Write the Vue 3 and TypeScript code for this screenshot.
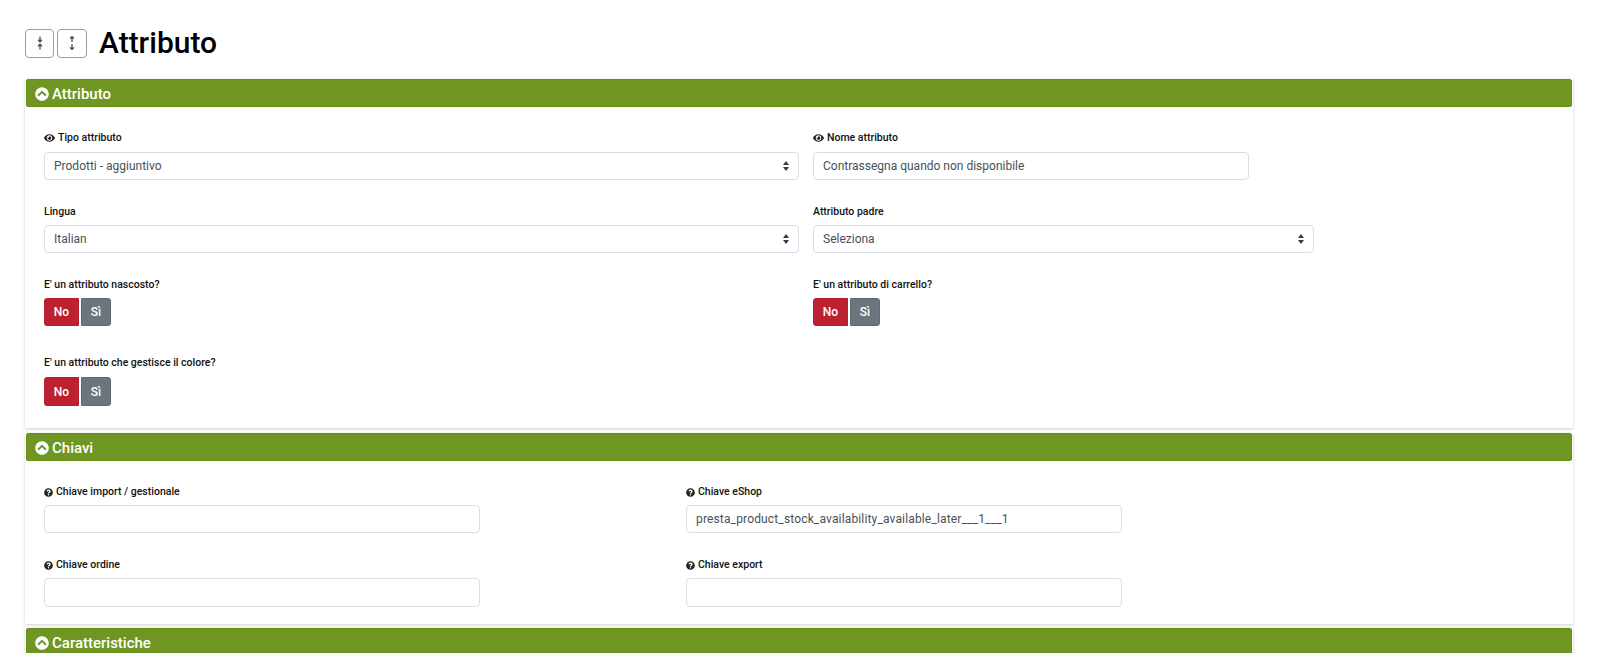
<script setup lang="ts">
const chevronUp =
  'M8 256C8 119 119 8 256 8s248 111 248 248-111 248-248 248S8 393 8 256zm231-113.9L103.5 277.6c-9.4 9.4-9.4 24.6 0 33.9l17 17c9.4 9.4 24.6 9.4 33.9 0L256 226.9l101.6 101.6c9.4 9.4 24.6 9.4 33.9 0l17-17c9.4-9.4 9.4-24.6 0-33.9L273 142.1c-9.4-9.4-24.6-9.4-34 0z'
const question =
  'M504 256c0 136.997-111.043 248-248 248S8 392.997 8 256C8 119.083 119.043 8 256 8s248 111.083 248 248zM262.655 90c-54.497 0-89.255 22.957-116.549 63.758-3.536 5.286-2.353 12.415 2.715 16.258l34.699 26.31c5.205 3.947 12.621 3.008 16.665-2.122 17.864-22.658 30.113-35.797 57.303-35.797 20.429 0 45.698 13.148 45.698 32.958 0 14.976-12.363 22.667-32.534 33.976C247.128 238.528 216 254.941 216 296v4c0 6.627 5.373 12 12 12h56c6.627 0 12-5.373 12-12v-1.333c0-28.462 83.186-29.647 83.186-106.667 0-58.002-60.165-102-116.531-102zM256 338c-25.365 0-46 20.635-46 46 0 25.364 20.635 46 46 46s46-20.636 46-46c0-25.365-20.635-46-46-46z'
const eye =
  'M572.52 241.4C518.29 135.59 410.93 64 288 64S57.68 135.64 3.48 241.41a32.35 32.35 0 0 0 0 29.19C57.71 376.41 165.07 448 288 448s230.32-71.64 284.52-177.41a32.35 32.35 0 0 0 0-29.19zM288 400a144 144 0 1 1 144-144 143.93 143.93 0 0 1-144 144zm0-240a95.31 95.31 0 0 0-25.31 3.79 47.85 47.85 0 0 1-66.9 66.9A95.78 95.78 0 1 0 288 160z'
</script>

<template>
  <div class="page">
    <header class="page-head">
      <div class="tools">
        <button class="tool" type="button" aria-label="Comprimi">
          <svg width="8" height="14" viewBox="0 0 8 14">
            <path d="M4 0.500v5M2 3.700 4 5.800l2-2.100M4 13.500v-5M2 10.300 4 8.200l2 2.100" fill="none" stroke="#495057" stroke-width="1.300" />
          </svg>
        </button>
        <button class="tool" type="button" aria-label="Espandi">
          <svg width="8" height="14" viewBox="0 0 8 14">
            <path d="M4 0.500v5.500M2 2.600 4 .500l2 2.100M4 13.500V8M2 11.400 4 13.500l2-2.100" fill="none" stroke="#495057" stroke-width="1.300" />
          </svg>
        </button>
      </div>
      <h1 class="title">Attributo</h1>
    </header>

    <section class="panel">
      <h2 class="panel-head">
        <svg class="head-icon" viewBox="0 0 512 512"><path :d="chevronUp" /></svg>
        Attributo
      </h2>
      <div class="panel-body body-one">
        <div class="row row-a">
          <div class="field col-wide">
            <label class="lbl">
              <svg class="eye" viewBox="0 0 576 512"><path :d="eye" /></svg>
              Tipo attributo
            </label>
            <select class="ctl sel">
              <option>Prodotti - aggiuntivo</option>
            </select>
          </div>
          <div class="field">
            <label class="lbl">
              <svg class="eye" viewBox="0 0 576 512"><path :d="eye" /></svg>
              Nome attributo
            </label>
            <input class="ctl w-436" type="text" value="Contrassegna quando non disponibile" />
          </div>
        </div>

        <div class="row row-b">
          <div class="field col-wide">
            <label class="lbl">Lingua</label>
            <select class="ctl sel">
              <option>Italian</option>
            </select>
          </div>
          <div class="field">
            <label class="lbl">Attributo padre</label>
            <select class="ctl sel w-501">
              <option>Seleziona</option>
            </select>
          </div>
        </div>

        <div class="row row-c">
          <div class="field col-wide">
            <label class="lbl">E' un attributo nascosto?</label>
            <div class="toggle">
              <button class="btn no" type="button">No</button>
              <button class="btn si" type="button">Sì</button>
            </div>
          </div>
          <div class="field">
            <label class="lbl">E' un attributo di carrello?</label>
            <div class="toggle">
              <button class="btn no" type="button">No</button>
              <button class="btn si" type="button">Sì</button>
            </div>
          </div>
        </div>

        <div class="row row-d">
          <div class="field col-wide">
            <label class="lbl">E' un attributo che gestisce il colore?</label>
            <div class="toggle">
              <button class="btn no tall" type="button">No</button>
              <button class="btn si tall" type="button">Sì</button>
            </div>
          </div>
        </div>
      </div>
    </section>

    <section class="panel">
      <h2 class="panel-head">
        <svg class="head-icon" viewBox="0 0 512 512"><path :d="chevronUp" /></svg>
        Chiavi
      </h2>
      <div class="panel-body body-two">
        <div class="row">
          <div class="field col-keys">
            <label class="lbl">
              <svg class="help" viewBox="0 0 512 512"><path :d="question" /></svg>
              Chiave import / gestionale
            </label>
            <input class="ctl w-436" type="text" />
          </div>
          <div class="field">
            <label class="lbl">
              <svg class="help" viewBox="0 0 512 512"><path :d="question" /></svg>
              Chiave eShop
            </label>
            <input class="ctl w-436 long" type="text" value="presta_product_stock_availability_available_later___1___1" />
          </div>
        </div>
        <div class="row">
          <div class="field col-keys">
            <label class="lbl">
              <svg class="help" viewBox="0 0 512 512"><path :d="question" /></svg>
              Chiave ordine
            </label>
            <input class="ctl w-436 tall" type="text" />
          </div>
          <div class="field">
            <label class="lbl">
              <svg class="help" viewBox="0 0 512 512"><path :d="question" /></svg>
              Chiave export
            </label>
            <input class="ctl w-436 tall" type="text" />
          </div>
        </div>
      </div>
    </section>

    <section class="panel">
      <h2 class="panel-head">
        <svg class="head-icon" viewBox="0 0 512 512"><path :d="chevronUp" /></svg>
        Caratteristiche
      </h2>
    </section>
  </div>
</template>

<style>
html,
body {
  margin: 0;
  height: 653px;
  overflow: hidden;
  background: #fff;
}
</style>

<style scoped>
.page {
  padding: 28px 27px 0 25px;
  font-family: Roboto, "Liberation Sans", sans-serif;
  color: #000;
}

.page-head {
  display: flex;
  align-items: center;
  gap: 12px;
  height: 30px;
  margin-bottom: 21px;
}

.tools {
  display: flex;
  gap: 3px;
}

.tool {
  display: flex;
  align-items: center;
  justify-content: center;
  width: 29px;
  height: 29px;
  padding: 0;
  background: #fff;
  border: 1px solid #9a9fa5;
  border-radius: 4px;
}

.tool + .tool {
  width: 30px;
}

.title {
  margin: 0;
  font-size: 30px;
  font-weight: 500;
  line-height: 30px;
}

.panel {
  background: #fff;
  margin-bottom: 5px;
  box-shadow: 0 1px 3px rgba(0, 0, 0, 0.2);
}

.panel:nth-of-type(2) {
  margin-bottom: 4px;
}

.panel-head {
  display: flex;
  align-items: center;
  gap: 3px;
  height: 28px;
  box-sizing: border-box;
  margin: 0 1px;
  padding: 1px 0 0 8px;
  background: #6f9623;
  border: 1px solid #65910f;
  border-radius: 2px;
  color: #fff;
  font-size: 15px;
  font-weight: 500;
}

.head-icon {
  width: 14px;
  height: 14px;
  fill: #fff;
}

.panel-body {
  padding-left: 19px;
  box-sizing: border-box;
}

.body-one {
  padding-top: 24px;
  height: 321px;
}

.body-two {
  padding-top: 24px;
  height: 163px;
}

.row {
  display: flex;
  margin-bottom: 25px;
}

.row-b .lbl {
  margin-bottom: 6px;
}

.row-c {
  margin-bottom: 30px;
}

.field {
  display: flex;
  flex-direction: column;
}

.col-wide {
  width: 769px;
}

.col-wide .ctl {
  width: 755px;
}

.col-keys {
  width: 642px;
}

.lbl {
  display: flex;
  align-items: center;
  gap: 3px;
  height: 14px;
  margin-bottom: 6px;
  font-size: 10.500px;
  font-weight: 500;
  line-height: 14px;
  color: #111;
}

.row-a .lbl,
.row-d .lbl {
  margin-bottom: 7px;
}

.eye {
  width: 11px;
  height: 10px;
  fill: #222;
}

.help {
  width: 9px;
  height: 9px;
  fill: #222;
}

.ctl {
  box-sizing: border-box;
  height: 28px;
  padding: 0 9px;
  background-color: #fff;
  border: 1px solid #dadce6;
  border-radius: 4px;
  font-family: inherit;
  font-size: 12px;
  color: #495057;
  outline: none;
}

.ctl.tall {
  height: 29px;
}

.ctl.long {
  letter-spacing: 0.15px;
}

.sel {
  appearance: none;
  background-image: url("data:image/svg+xml,%3Csvg xmlns='http://www.w3.org/2000/svg' viewBox='0 0 8 10'%3E%3Cpath fill='%23343a40' d='M4 0 7 4H1zM4 10 1 6h6z'/%3E%3C/svg%3E");
  background-repeat: no-repeat;
  background-position: right 8px center;
  background-size: 8px 10px;
}

.w-436 {
  width: 436px;
}

.w-501 {
  width: 501px;
}

.toggle {
  display: flex;
  gap: 2px;
}

.btn {
  height: 28px;
  padding: 0;
  border: 1px solid transparent;
  color: #fff;
  font-family: inherit;
  font-size: 12px;
  font-weight: 500;
}

.btn.tall {
  height: 29px;
}

.no {
  width: 35px;
  background: #bd2130;
  border-color: #b21f2d;
  border-radius: 3px 0 0 3px;
}

.si {
  width: 30px;
  background: #6c757d;
  border-color: #626a72;
  border-radius: 0 3px 3px 0;
}
</style>
